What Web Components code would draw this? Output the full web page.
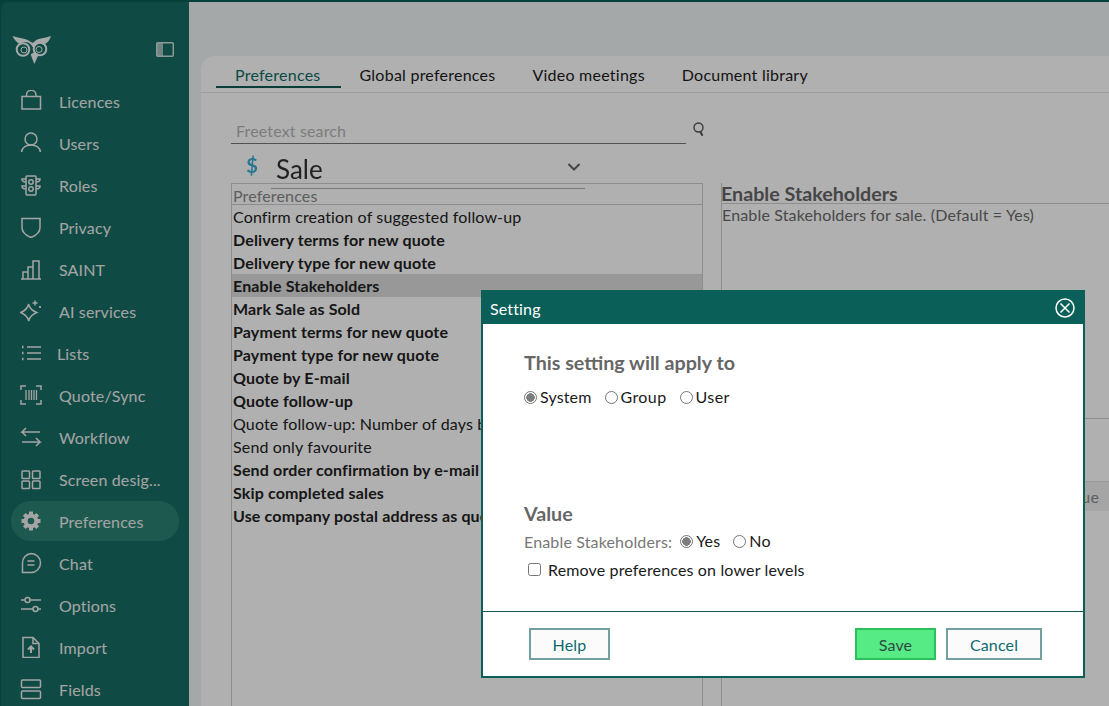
<!DOCTYPE html>
<html><head><meta charset="utf-8">
<style>
html,body{margin:0;padding:0;height:100%;overflow:hidden}
body{font-family:Lato,"Open Sans",sans-serif;font-size:16px;letter-spacing:.15px;background:#0a5f58}
</style></head><body>
<app-shell>
<side-nav slot="nav"></side-nav>
<pref-tabs slot="tabs"></pref-tabs>
<pref-page slot="page"></pref-page>
</app-shell>
<scrim-layer></scrim-layer>
<setting-dialog></setting-dialog>
<script>
const I={
licences:'<path d="M2 6.500h18.500V19H2zM6.500 6.500V5a4.750 4.750 0 0 1 9.500 0v1.500"/>',
users:'<circle cx="11" cy="7" r="6"/><path d="M1.500 20c1-5 4.500-7 9.500-7s8.500 2 9.500 7"/>',
roles:'<rect x="6" y="2" width="10" height="19" rx="1"/><circle cx="11" cy="8" r="2.2"/><circle cx="11" cy="15" r="2.2"/><path d="M6 5H2c0 2 2 3 4 3M16 5h4c0 2-2 3-4 3M6 12H2c0 2 2 3 4 3M16 12h4c0 2-2 3-4 3"/>',
privacy:'<path d="M2 2.500c6 0 12 0 18 0v9c0 5-4 8-9 10-5-2-9-5-9-10z"/>',
saint:'<path d="M1 21h20M3 21v-7h5v7M8 21V9h5v12M13 21V3h6v18"/>',
ai:'<path d="M8.700 4.500c1 4 3 6 8 8-5 2-7 4-8 8.500-1-4.500-3-6.500-8-8.500 5-2 7-4 8-8.500z"/><path d="M15 .5v5M12.500 3h5M20 6v2M19 7h2"/>',
lists:'<path d="M7 5h14M7 11h14M7 17h14"/><path d="M2 5h1.500M2 11h1.500M2 17h1.500" stroke-width="2.400"/>',
quote:'<path d="M1 6V2h5M16 2h5v4M21 16v4h-5M6 20H1v-4"/><path d="M6 6v10M9 6v10M11.500 6v10M14 6v10M16.500 6v10" stroke-width="1.300"/>',
workflow:'<path d="M6 2 2 6h18M2 6l4 4M16 12l4 4H2M20 16l-4 4"/>',
screen:'<rect x="2" y="3" width="7.500" height="7.500" rx=".8"/><rect x="12.500" y="3" width="7.500" height="7.500" rx=".8"/><rect x="2" y="13" width="7.500" height="7.500" rx=".8"/><rect x="12.500" y="13" width="7.500" height="7.500" rx=".8"/>',
prefs:'<path stroke-width="4" d="M11 1.500v19M1.500 11h19M4.300 4.300l13.400 13.400M17.700 4.300 4.300 17.700"/><circle cx="11" cy="11" r="7.300" fill="currentColor" stroke="none"/><circle cx="11" cy="11" r="3.300" fill="#2a8273" stroke="none"/>',
chat:'<path d="M11 1.500a9.500 9.500 0 1 1 0 19H2.500v-9.500A9.500 9.500 0 0 1 11 1.500z"/><path d="M7.500 9h7M7.500 13h7"/>',
options:'<path d="M1 6h4M10 6h11M1 15h12M18 15h3"/><circle cx="7.500" cy="6" r="2.500"/><circle cx="15.500" cy="15" r="2.500"/>',
import:'<path d="M3 1.500h10l6 6v14H3z"/><path d="M13 1.500v6h6"/><path d="M11 17v-6M8 13.500l3-3 3 3" stroke-width="2"/>',
fields:'<rect x="1.500" y="2" width="19" height="7.500" rx="1"/><rect x="1.500" y="13" width="19" height="7.500" rx="1"/>'
};
const ITEMS=[['Licences','licences'],['Users','users'],['Roles','roles'],['Privacy','privacy'],['SAINT','saint'],['AI services','ai'],['Lists','lists'],['Quote/Sync','quote'],['Workflow','workflow'],['Screen desig...','screen'],['Preferences','prefs',1],['Chat','chat'],['Options','options'],['Import','import'],['Fields','fields']];
function def(name,html,setup){customElements.define(name,class extends HTMLElement{constructor(){super();const s=this.attachShadow({mode:'open'});s.innerHTML=html;if(setup)setup(s,this)}})}

def('app-shell',`<style>
:host{display:flex;width:1109px;height:706px;overflow:hidden;color:#222}
.nav{flex:none;width:189px;height:704px;margin-top:2px}
.main{flex:1;background:#eff3f3;padding-top:54px;min-width:0;height:704px;margin-top:2px}
.panel{margin-left:12px;height:100%;background:#fff;border-top-left-radius:14px;display:flex;flex-direction:column}
</style><div class="nav"><slot name="nav"></slot></div>
<div class="main"><div class="panel"><slot name="tabs"></slot><slot name="page"></slot></div></div>`);

def('side-nav',`<style>
:host{display:block;height:100%;background:#176d63;border-top-left-radius:8px;margin-left:1px;color:#eee}
.top{display:flex;height:79px;padding:32px 15px 0 11px;box-sizing:border-box;justify-content:space-between}
.list{display:flex;flex-direction:column}
</style><div class="top"><svg width="40" height="32" viewBox="0 0 40 32" fill="none" stroke="#f0f5f5">
<path fill="#f0f5f5" stroke="none" d="M.5 2C8 4.500 14 4 19 8c1 1 2 1 3 0 3-4 10-3.500 17-6-1.500 4.500-3.500 6.500-6 8-3.500-2.500-8-1.500-10.500 3h-2C18 7.500 12 6.500 7.500 10 4.500 8 2 5.500.5 2z"/>
<circle cx="11" cy="15.500" r="6.300" stroke-width="2"/><circle cx="28" cy="15" r="6.300" stroke-width="2"/>
<circle cx="12" cy="16" r="3" stroke-width="1"/><circle cx="27" cy="15.500" r="3" stroke-width="1"/>
<path fill="#f0f5f5" stroke="none" d="M18.700 20.500c2-2.500 6-2.500 8 0l-4.400 9.500z"/></svg>
<svg width="18" height="15" viewBox="0 0 18 15" style="margin-top:8px"><rect x=".75" y=".75" width="16.500" height="13.500" rx="1" fill="none" stroke="#cfdcdb" stroke-width="1.500"/><rect x="1" y="1" width="6" height="13" fill="#cfdcdb" opacity=".75"/></svg></div>
<div class="list"></div>`,s=>{
const l=s.querySelector('.list');
ITEMS.forEach(([t,i,a])=>{const e=document.createElement('nav-item');e.setAttribute('icon',i);if(a)e.setAttribute('active','');if(t=='Lists')e.style.gap='15px';e.textContent=t;l.append(e)});
});

def('nav-item',`<style>
:host{display:flex;align-items:center;height:40px;margin:0 10px 2px 10px;padding-left:9px;gap:17px;border-radius:20px;box-sizing:border-box;white-space:nowrap}
:host([active]){background:#2a8273}
svg{flex:none;width:22px;height:22px;fill:none;stroke:currentColor;stroke-width:1.500}
</style><svg viewBox="0 0 22 22"></svg><slot></slot>`,(s,h)=>{
queueMicrotask(()=>{s.querySelector('svg').innerHTML=I[h.getAttribute('icon')]||''});
});

def('pref-tabs',`<style>
:host{display:flex;flex:none;height:36px;padding-left:15px;border-bottom:1px solid #e3e3e3;color:#1c1c1c;letter-spacing:.24px}
.t{padding:10px 19px 0;height:32px;box-sizing:border-box;line-height:18px}
.on{color:#0d6d68;border-bottom:2px solid #0f5a52;padding-right:20px}
.g{padding-right:18px}
</style><div class="t on">Preferences</div><div class="t g">Global preferences</div><div class="t">Video meetings</div><div class="t" style="margin-left:-1px">Document library</div>`);

def('pref-page',`<style>
:host{display:block;flex:1;min-height:0;overflow:hidden}
.search{display:flex;align-items:flex-start;margin:30px 0 0 30px}
.sf{width:450px;padding-left:5px;height:20px;line-height:16px;border-bottom:1px solid #777;color:#b5b5b5}
.search svg{margin:0 0 0 7px;position:relative;top:-2px}
.sel{display:flex;height:45px;margin-left:30px;position:relative;z-index:1}
.dollar{width:40px;text-indent:2px;text-align:center;color:#2a7590;font-weight:700;font-size:20px;line-height:42px}
.sv{display:flex;justify-content:space-between;box-sizing:border-box;width:314px;height:45px;border-bottom:1px solid #777;padding:6px 4px 0 5px;font-size:26px;line-height:38px;letter-spacing:0;color:#222}
.sv svg{margin:12px 0 0 0}
.cols{display:flex;align-items:stretch;margin:-6px 0 0 30px;height:600px}
.list{width:470px;flex:none;border:1px solid #ccc;border-bottom:0;height:100%}
.h{height:20px;line-height:24px;padding-left:1px;color:#888;border-bottom:1px solid #ccc}
.r{height:23px;line-height:23px;padding-left:1px;white-space:nowrap;overflow:hidden}
.r:first-of-type{height:24px}
.b{font-weight:700}
.sel-r{background:#dcdcdc}
.right{flex:1;margin-left:18px;min-width:0;border-left:1px solid #ccc;box-sizing:border-box;display:flex;flex-direction:column}
.title{font-size:19.700px;letter-spacing:0;font-weight:700;color:#666;height:20px;line-height:22px;margin:0 0 0 -1px;border-bottom:1px solid #ccc;white-space:nowrap}
.d{color:#6a6a6a;height:214px;line-height:22px;border-bottom:1px solid #ccc}
.th{height:29px;margin-top:62px;background:#f0f0f0;border-top:1px solid #ddd;line-height:30px;color:#888;text-align:right;padding-right:10px}
</style>
<div class="search"><div class="sf">Freetext search</div><svg width="13" height="17" viewBox="0 0 13 17" fill="none" stroke="#555" stroke-width="1.400"><circle cx="5.500" cy="6.500" r="4.500"/><path d="M7.500 11l2 3.800" stroke-width="2"/></svg></div>
<div class="sel"><div class="dollar">$</div><div class="sv"><span>Sale</span><svg width="14" height="10" viewBox="0 0 14 10" fill="none" stroke="#444" stroke-width="2"><path d="M1.500 2 7 7.500 12.500 2"/></svg></div></div>
<div class="cols"><div class="list"><div class="h">Preferences</div>
<div class="r">Confirm creation of suggested follow-up</div>
<div class="r b">Delivery terms for new quote</div>
<div class="r b">Delivery type for new quote</div>
<div class="r b sel-r">Enable Stakeholders</div>
<div class="r b">Mark Sale as Sold</div>
<div class="r b">Payment terms for new quote</div>
<div class="r b">Payment type for new quote</div>
<div class="r b">Quote by E-mail</div>
<div class="r b">Quote follow-up</div>
<div class="r">Quote follow-up: Number of days before</div>
<div class="r">Send only favourite</div>
<div class="r b">Send order confirmation by e-mail</div>
<div class="r b">Skip completed sales</div>
<div class="r b">Use company postal address as quote address</div>
</div>
<div class="right"><div class="title">Enable Stakeholders</div><div class="d">Enable Stakeholders for sale. (Default = Yes)</div><div class="th">Value</div></div></div>`);

def('scrim-layer',`<style>:host{display:block;position:fixed;inset:0;background:rgba(0,0,0,.31)}</style>`);

def('radio-opt',`<style>
:host{display:inline-flex;align-items:center;gap:3px;color:#1a1a1a;line-height:18px}
i{box-sizing:border-box;display:block;width:13px;height:13px;border:1px solid #767676;border-radius:50%;background:#fff}
:host([on]) i{background:radial-gradient(circle,#7d7d7d 0 4px,#fff 4.500px)}
</style><i></i><slot></slot>`);

def('dlg-btn',`<style>
:host{display:block;box-sizing:border-box;height:32px;border:2px solid #72a09e;background:#fbfbfb;color:#0d6a6e;text-align:center;line-height:29px}
:host([primary]){background:#57eb85;border-color:#2dc15e;color:#2f4a44}
</style><slot></slot>`);

def('setting-dialog',`<style>
:host{display:flex;flex-direction:column;position:fixed;left:481px;top:290px;width:604px;height:388px;box-sizing:border-box;border:2px solid #0a5f58;border-top:0;background:#fff}
.hd{display:flex;flex:none;justify-content:space-between;align-items:center;height:34px;margin:0 -2px;background:#0a5f58;color:#fff;padding:1px 10px 0 9px;box-sizing:border-box}
.hd span{padding-top:2px}
.bd{flex:1;padding:0 0 0 41px;min-height:0}
h3{margin:0;font-size:19.700px;letter-spacing:0;line-height:22px;color:#666;font-weight:700}
.a{margin-top:28px}
.row{display:flex;margin-top:14px;height:18px}
.sp1{margin-left:13px;letter-spacing:.4px}.sp2{margin-left:13px;letter-spacing:.4px}
.v{margin-top:97px}
.val{display:flex;align-items:center;height:18px;margin-top:7px;color:#777}
.chk{display:flex;align-items:center;margin:10px 0 0 4px;height:18px;gap:7px;color:#1a1a1a}
.chk i{display:block;box-sizing:border-box;width:13px;height:13px;border:1px solid #767676;border-radius:2.500px}
.ft{flex:none;display:flex;height:65px;box-sizing:border-box;border-top:1px solid #0f5a52;padding:16px 41px 0 46px}
</style>
<div class="hd"><span>Setting</span><svg width="20" height="20" viewBox="0 0 20 20" fill="none" stroke="#fff" stroke-width="1.500"><circle cx="10" cy="10" r="9"/><path d="M5.500 5.500l9 9M14.500 5.500l-9 9"/></svg></div>
<div class="bd"><h3 class="a">This setting will apply to</h3>
<div class="row"><radio-opt on>System</radio-opt><radio-opt class="sp1">Group</radio-opt><radio-opt class="sp2">User</radio-opt></div>
<h3 class="v">Value</h3>
<div class="val"><span>Enable Stakeholders:</span><radio-opt on style="margin-left:8px">Yes</radio-opt><radio-opt style="margin-left:13px">No</radio-opt></div>
<div class="chk"><i></i><span>Remove preferences on lower levels</span></div></div>
<div class="ft"><dlg-btn style="width:81px">Help</dlg-btn><dlg-btn primary style="width:81px;margin-left:auto">Save</dlg-btn><dlg-btn style="width:96px;margin-left:10px">Cancel</dlg-btn></div>`);
</script>
</body></html>
